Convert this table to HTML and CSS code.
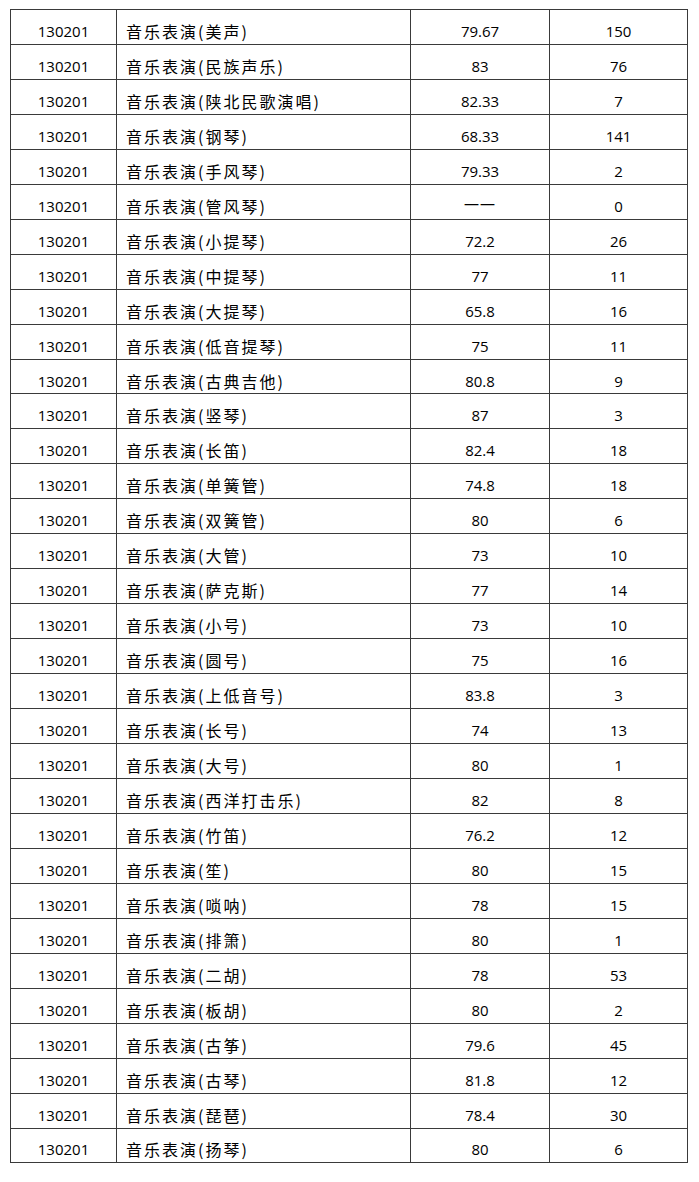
FILE: index.html
```html
<!DOCTYPE html>
<html lang="zh-CN">
<head>
<meta charset="utf-8">
<title>音乐表演</title>
<link rel="stylesheet" href="styles.css">
</head>
<body>
<div class="table">
  <div class="row"><div class="cell code">130201</div><div class="cell name">音乐表演(美声)</div><div class="cell num">79.67</div><div class="cell num">150</div></div>
  <div class="row"><div class="cell code">130201</div><div class="cell name">音乐表演(民族声乐)</div><div class="cell num">83</div><div class="cell num">76</div></div>
  <div class="row"><div class="cell code">130201</div><div class="cell name">音乐表演(陕北民歌演唱)</div><div class="cell num">82.33</div><div class="cell num">7</div></div>
  <div class="row"><div class="cell code">130201</div><div class="cell name">音乐表演(钢琴)</div><div class="cell num">68.33</div><div class="cell num">141</div></div>
  <div class="row"><div class="cell code">130201</div><div class="cell name">音乐表演(手风琴)</div><div class="cell num">79.33</div><div class="cell num">2</div></div>
  <div class="row"><div class="cell code">130201</div><div class="cell name">音乐表演(管风琴)</div><div class="cell num dash">——</div><div class="cell num">0</div></div>
  <div class="row"><div class="cell code">130201</div><div class="cell name">音乐表演(小提琴)</div><div class="cell num">72.2</div><div class="cell num">26</div></div>
  <div class="row"><div class="cell code">130201</div><div class="cell name">音乐表演(中提琴)</div><div class="cell num">77</div><div class="cell num">11</div></div>
  <div class="row"><div class="cell code">130201</div><div class="cell name">音乐表演(大提琴)</div><div class="cell num">65.8</div><div class="cell num">16</div></div>
  <div class="row"><div class="cell code">130201</div><div class="cell name">音乐表演(低音提琴)</div><div class="cell num">75</div><div class="cell num">11</div></div>
  <div class="row"><div class="cell code">130201</div><div class="cell name">音乐表演(古典吉他)</div><div class="cell num">80.8</div><div class="cell num">9</div></div>
  <div class="row"><div class="cell code">130201</div><div class="cell name">音乐表演(竖琴)</div><div class="cell num">87</div><div class="cell num">3</div></div>
  <div class="row"><div class="cell code">130201</div><div class="cell name">音乐表演(长笛)</div><div class="cell num">82.4</div><div class="cell num">18</div></div>
  <div class="row"><div class="cell code">130201</div><div class="cell name">音乐表演(单簧管)</div><div class="cell num">74.8</div><div class="cell num">18</div></div>
  <div class="row"><div class="cell code">130201</div><div class="cell name">音乐表演(双簧管)</div><div class="cell num">80</div><div class="cell num">6</div></div>
  <div class="row"><div class="cell code">130201</div><div class="cell name">音乐表演(大管)</div><div class="cell num">73</div><div class="cell num">10</div></div>
  <div class="row"><div class="cell code">130201</div><div class="cell name">音乐表演(萨克斯)</div><div class="cell num">77</div><div class="cell num">14</div></div>
  <div class="row"><div class="cell code">130201</div><div class="cell name">音乐表演(小号)</div><div class="cell num">73</div><div class="cell num">10</div></div>
  <div class="row"><div class="cell code">130201</div><div class="cell name">音乐表演(圆号)</div><div class="cell num">75</div><div class="cell num">16</div></div>
  <div class="row"><div class="cell code">130201</div><div class="cell name">音乐表演(上低音号)</div><div class="cell num">83.8</div><div class="cell num">3</div></div>
  <div class="row"><div class="cell code">130201</div><div class="cell name">音乐表演(长号)</div><div class="cell num">74</div><div class="cell num">13</div></div>
  <div class="row"><div class="cell code">130201</div><div class="cell name">音乐表演(大号)</div><div class="cell num">80</div><div class="cell num">1</div></div>
  <div class="row"><div class="cell code">130201</div><div class="cell name">音乐表演(西洋打击乐)</div><div class="cell num">82</div><div class="cell num">8</div></div>
  <div class="row"><div class="cell code">130201</div><div class="cell name">音乐表演(竹笛)</div><div class="cell num">76.2</div><div class="cell num">12</div></div>
  <div class="row"><div class="cell code">130201</div><div class="cell name">音乐表演(笙)</div><div class="cell num">80</div><div class="cell num">15</div></div>
  <div class="row"><div class="cell code">130201</div><div class="cell name">音乐表演(唢呐)</div><div class="cell num">78</div><div class="cell num">15</div></div>
  <div class="row"><div class="cell code">130201</div><div class="cell name">音乐表演(排箫)</div><div class="cell num">80</div><div class="cell num">1</div></div>
  <div class="row"><div class="cell code">130201</div><div class="cell name">音乐表演(二胡)</div><div class="cell num">78</div><div class="cell num">53</div></div>
  <div class="row"><div class="cell code">130201</div><div class="cell name">音乐表演(板胡)</div><div class="cell num">80</div><div class="cell num">2</div></div>
  <div class="row"><div class="cell code">130201</div><div class="cell name">音乐表演(古筝)</div><div class="cell num">79.6</div><div class="cell num">45</div></div>
  <div class="row"><div class="cell code">130201</div><div class="cell name">音乐表演(古琴)</div><div class="cell num">81.8</div><div class="cell num">12</div></div>
  <div class="row"><div class="cell code">130201</div><div class="cell name">音乐表演(琵琶)</div><div class="cell num">78.4</div><div class="cell num">30</div></div>
  <div class="row"><div class="cell code">130201</div><div class="cell name">音乐表演(扬琴)</div><div class="cell num">80</div><div class="cell num">6</div></div>
</div>
</body>
</html>
```

FILE: styles.css
```css
html, body {
  margin: 0;
  padding: 0;
  background: #ffffff;
}

body {
  font-family: "Open Sans", "Noto Sans CJK SC", sans-serif;
  font-size: 15px;
  color: #000000;
}

.table {
  margin: 9px 0 0 10px;
  width: max-content;
  border-left: 1px solid #3a3a3a;
  border-top: 1px solid #3a3a3a;
}

.row {
  display: grid;
  grid-template-columns: 106px 294px 139px 138px;
  height: 34.96px;
}

.cell {
  box-sizing: border-box;
  border-right: 1px solid #3a3a3a;
  border-bottom: 1px solid #3a3a3a;
  display: flex;
  align-items: center;
  justify-content: center;
  padding-top: 8px;
  line-height: 20px;
  white-space: nowrap;
}

.name {
  justify-content: flex-start;
  padding-left: 9px;
  font-family: "Noto Sans CJK SC", sans-serif;
  font-size: 16px;
  letter-spacing: 2px;
}

.dash {
  padding-top: 2px;
  letter-spacing: 1px;
}
```
